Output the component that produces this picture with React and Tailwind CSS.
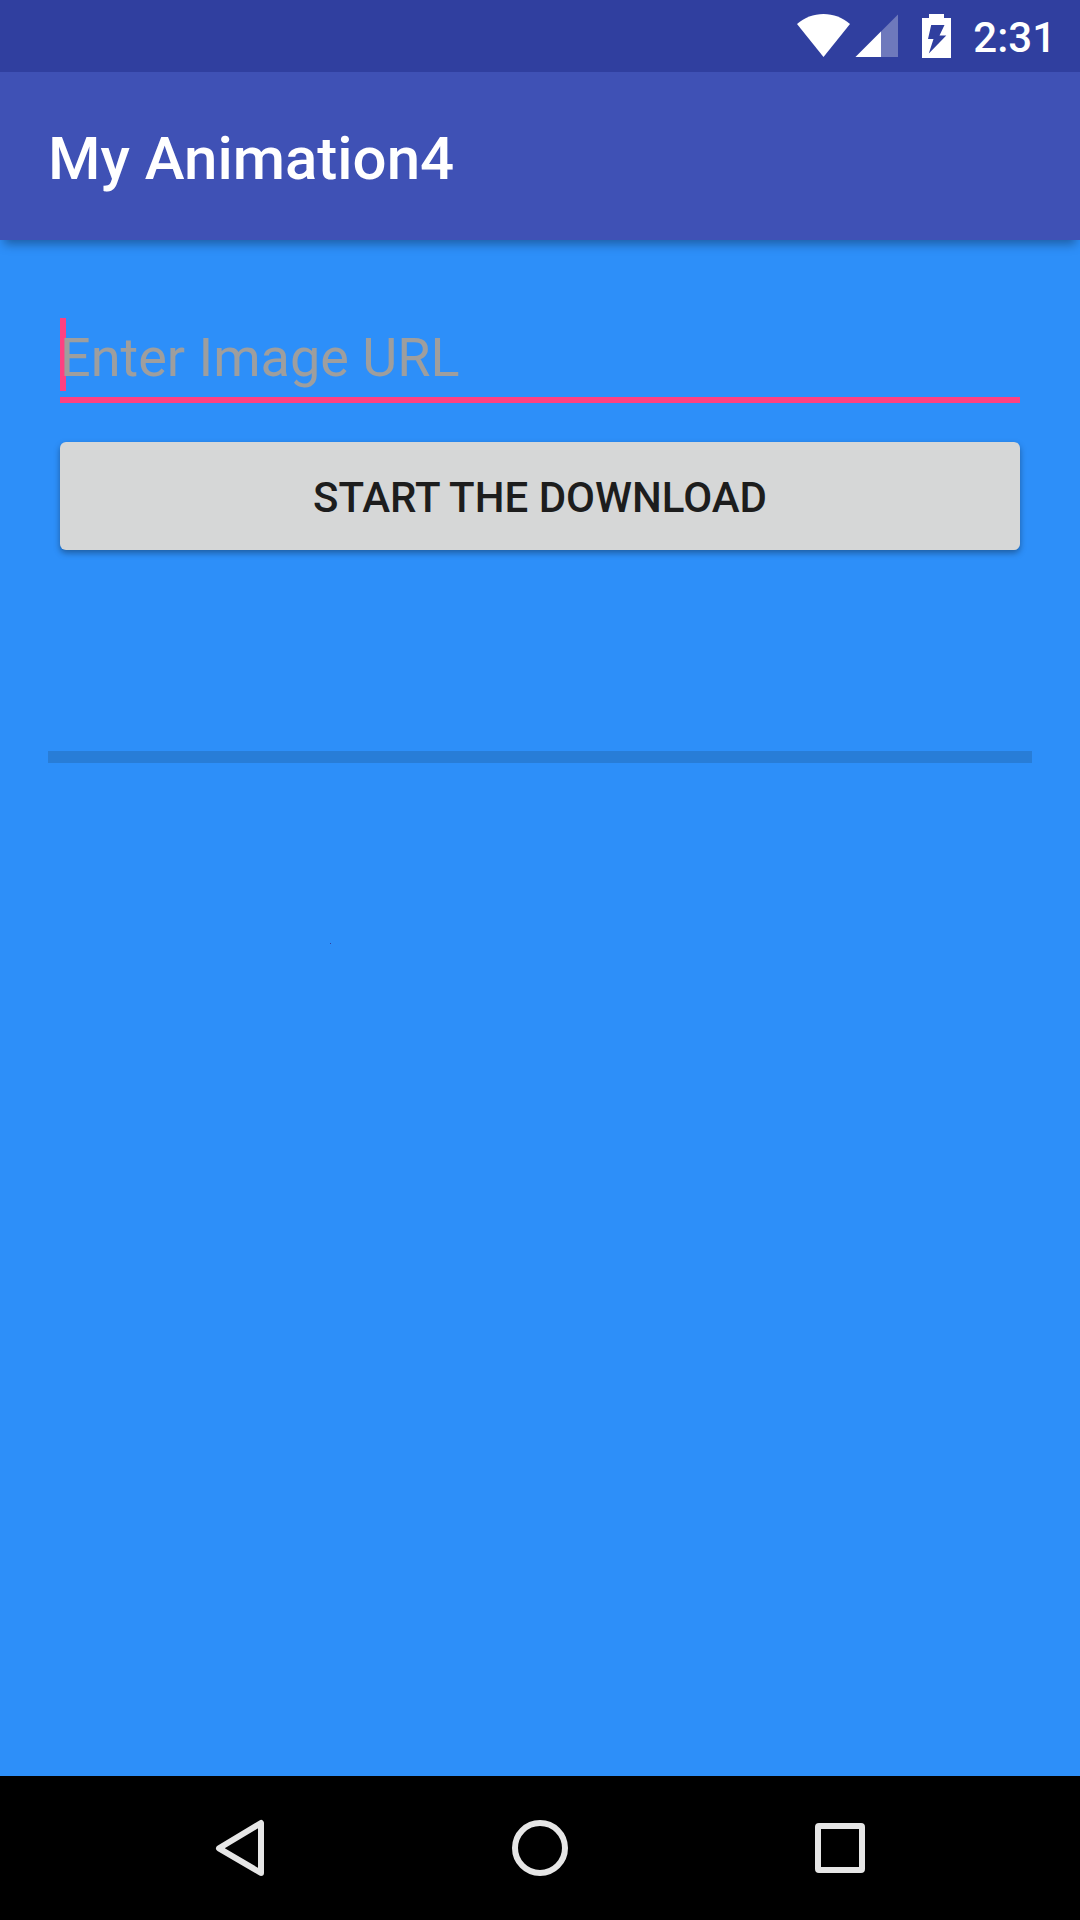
import React, { useState } from "react";

function StatusBar() {
  return (
    <div className="flex h-[72px] items-center justify-end bg-[#303f9f] pr-6 text-white">
      <svg className="mr-1 h-[44px] w-[55px]" viewBox="0 0 55 44" fill="currentColor" role="img" aria-label="Wi-Fi">
        <path d="M27.5 43 L1 10 C8.5 3.6 17.5 0 27.5 0 S46.500 3.600 54 10 Z" />
      </svg>
      <svg className="mr-6 h-[44px] w-[43px]" viewBox="0 0 43 44" fill="currentColor" role="img" aria-label="Mobile signal">
        <path d="M43 0.500 V43 H0.500 Z" opacity="0.3" />
        <path d="M26 17.500 V43 H0.500 Z" />
      </svg>
      <svg className="mr-[22px] h-[44px] w-[29px]" viewBox="0 0 29 44" fill="currentColor" role="img" aria-label="Battery charging">
        <path
          fillRule="evenodd"
          d="M7 0 H22 V4 H29 V44 H0 V4 H7 Z M9.200 11 H22.500 L17.500 21.500 H24.300 L6.800 39.500 L11.500 25 H6 Z"
        />
      </svg>
      <time className="pt-[3px] text-[42px] leading-[48px] font-medium">2:31</time>
    </div>
  );
}

function NavButton({ label, children }) {
  return (
    <button type="button" aria-label={label} className="flex h-full flex-1 items-center justify-center">
      <svg className="h-[60px] w-[60px]" viewBox="0 0 60 60" fill="none" stroke="#e6e6e6" strokeWidth="6" strokeLinejoin="round">
        {children}
      </svg>
    </button>
  );
}

function NavBar() {
  return (
    <nav className="flex h-36 bg-black px-[90px]">
      <NavButton label="Back">
        <path d="M51 5 V55 L9 30.300 Z" />
      </NavButton>
      <NavButton label="Home">
        <circle cx="30" cy="30" r="25" />
      </NavButton>
      <NavButton label="Recent apps">
        <rect x="8" y="8" width="44" height="44" rx="1" />
      </NavButton>
    </nav>
  );
}

export default function App() {
  const [url, setUrl] = useState("");
  return (
    <div className="flex min-h-screen flex-col bg-[#2d8ff9] font-[Roboto,sans-serif]">
      <StatusBar />
      <header className="flex h-[168px] items-center bg-[#3f51b5] px-12 pt-1.5 shadow-[0_8px_10px_-4px_rgba(0,0,0,0.35)]">
        <h1 className="text-[60px] leading-[72px] font-medium text-white">My Animation4</h1>
      </header>
      <main className="flex flex-1 flex-col px-12 pt-[78px]">
        <form className="flex flex-col px-3" onSubmit={(e) => e.preventDefault()}>
          <div className="group relative flex">
            <span
              aria-hidden="true"
              className="absolute top-0 left-0 h-[73px] w-1.5 bg-[#ff4081] group-focus-within:hidden"
            />
            <input
              type="text"
              aria-label="Enter Image URL"
              placeholder="Enter Image URL"
              value={url}
              onChange={(e) => setUrl(e.target.value)}
              className="relative h-[85px] w-full border-b-6 border-[#ff4081] bg-transparent text-[54px] text-[#1d1d1d] caret-[#ff4081] outline-none placeholder:text-[#9e9e9e]"
            />
          </div>
          <button
            type="submit"
            className="mt-[39px] h-[108px] rounded-md bg-[#d6d7d7] pt-[3px] text-[42px] leading-[48px] font-medium text-[#1d1d1d] shadow-[0_3px_6px_rgba(0,0,0,0.35)]"
          >
            START THE DOWNLOAD
          </button>
        </form>
        <progress
          aria-label="Download progress"
          value="0"
          max="100"
          className="mt-[201px] block h-3 w-full appearance-none [&::-webkit-progress-bar]:bg-[#287dd7] [&::-webkit-progress-value]:bg-[#ff4081]"
        />
        <div className="mt-[180px] ml-[282px] h-px w-px bg-[#303f9f]" />
      </main>
      <NavBar />
    </div>
  );
}
